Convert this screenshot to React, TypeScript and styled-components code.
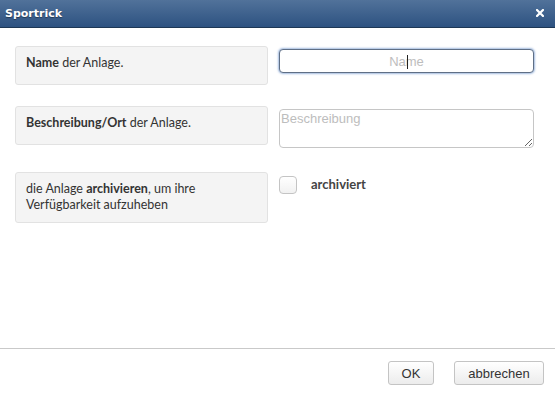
import React from "react";
import styled, { createGlobalStyle } from "styled-components";

const GlobalStyle = createGlobalStyle`
  html, body {
    margin: 0;
    padding: 0;
    background: #ffffff;
  }
  * {
    box-sizing: border-box;
  }
`;

const Dialog = styled.div`
  width: 555px;
  height: 396px;
  display: flex;
  flex-direction: column;
  background: #ffffff;
  font-family: Lato, "Open Sans", sans-serif;
`;

const TitleBar = styled.div`
  height: 28px;
  display: flex;
  align-items: center;
  justify-content: space-between;
  padding: 0 11px 1px 5px;
  background: linear-gradient(to bottom, #51729a 0%, #2d5281 100%);
  border-bottom: 1px solid #1d3755;
`;

const Title = styled.span`
  font-family: "DejaVu Sans", sans-serif;
  font-weight: bold;
  font-size: 11px;
  color: #ffffff;
  text-shadow: 0 1px 1px rgba(0, 0, 0, 0.4);
`;

const Close = styled.svg`
  width: 8px;
  height: 8px;
  display: block;
`;

const Body = styled.div`
  flex: 1;
  padding: 18px 21px 0 15px;
  display: flex;
  flex-direction: column;
  gap: 21px;
`;

const Row = styled.div`
  display: grid;
  grid-template-columns: 253px 255px;
  column-gap: 11px;
  align-items: start;
`;

const Hint = styled.div`
  min-height: 39px;
  padding: 8px 10px 9px;
  background: #f4f4f4;
  border: 1px solid #e2e2e2;
  border-radius: 3px;
  font-size: 12.5px;
  line-height: 16px;
  color: #333333;

  b {
    font-weight: 700;
  }
`;

const Field = styled.div<{ $top?: number }>`
  position: relative;
  padding-top: ${(p) => p.$top ?? 3}px;
  display: flex;
  align-items: center;
  gap: 14px;
`;

const TextInput = styled.input`
  width: 255px;
  height: 24px;
  padding: 0 6px;
  border: 1px solid #5f6f86;
  border-radius: 4px;
  box-shadow: 0 0 2px 1px rgba(125, 160, 210, 0.7);
  font-family: "Liberation Sans", Arial, sans-serif;
  font-size: 13px;
  text-align: center;
  outline: none;

  &::placeholder {
    color: #bdbdbd;
  }
`;

const Caret = styled.span`
  position: absolute;
  left: 128px;
  top: 9px;
  width: 1px;
  height: 14px;
  background: #222222;
`;

const TextArea = styled.textarea`
  width: 255px;
  height: 39px;
  margin: 0 0 3px;
  padding: 1px 1px;
  border: 1px solid #c6c6c6;
  border-radius: 4px;
  font-family: "Liberation Sans", Arial, sans-serif;
  font-size: 13px;
  line-height: 16px;
  resize: vertical;
  outline: none;

  &::placeholder {
    color: #bdbdbd;
  }
`;

const Check = styled.span`
  width: 18px;
  height: 18px;
  border: 1px solid #c4c4c4;
  border-radius: 4px;
  background: linear-gradient(to bottom, #ffffff, #f1f1f1);
`;

const CheckLabel = styled.span`
  font-size: 13px;
  font-weight: 700;
  color: #444444;
  margin-top: -2px;
`;

const Footer = styled.div`
  height: 48px;
  border-top: 1px solid #c9c9c9;
  display: flex;
  justify-content: flex-end;
  align-items: flex-start;
  gap: 20px;
  padding: 12px 11px 0 0;
`;

const Button = styled.button<{ $w: number }>`
  width: ${(p) => p.$w}px;
  height: 24px;
  padding: 0;
  border: 1px solid #c4c4c4;
  border-radius: 3px;
  background: linear-gradient(to bottom, #ffffff, #ececec);
  font-family: "Liberation Sans", Arial, sans-serif;
  font-size: 13px;
  color: #333333;
`;

export default function App(): React.ReactElement {
  return (
    <>
      <GlobalStyle />
      <Dialog>
        <TitleBar>
          <Title>Sportrick</Title>
          <Close viewBox="0 0 8 8">
            <path
              d="M1 1 L7 7 M7 1 L1 7"
              stroke="#ffffff"
              strokeWidth="2.2"
              strokeLinecap="square"
            />
          </Close>
        </TitleBar>
        <Body>
          <Row>
            <Hint>
              <b>Name</b> der Anlage.
            </Hint>
            <Field>
              <TextInput placeholder="Name" readOnly />
              <Caret />
            </Field>
          </Row>
          <Row>
            <Hint>
              <b>Beschreibung/Ort</b> der Anlage.
            </Hint>
            <Field>
              <TextArea placeholder="Beschreibung" />
            </Field>
          </Row>
          <Row>
            <Hint>
              die Anlage <b>archivieren</b>, um ihre
              <br />
              Verfügbarkeit aufzuheben
            </Hint>
            <Field $top={4}>
              <Check />
              <CheckLabel>archiviert</CheckLabel>
            </Field>
          </Row>
        </Body>
        <Footer>
          <Button $w={46}>OK</Button>
          <Button $w={90}>abbrechen</Button>
        </Footer>
      </Dialog>
    </>
  );
}
